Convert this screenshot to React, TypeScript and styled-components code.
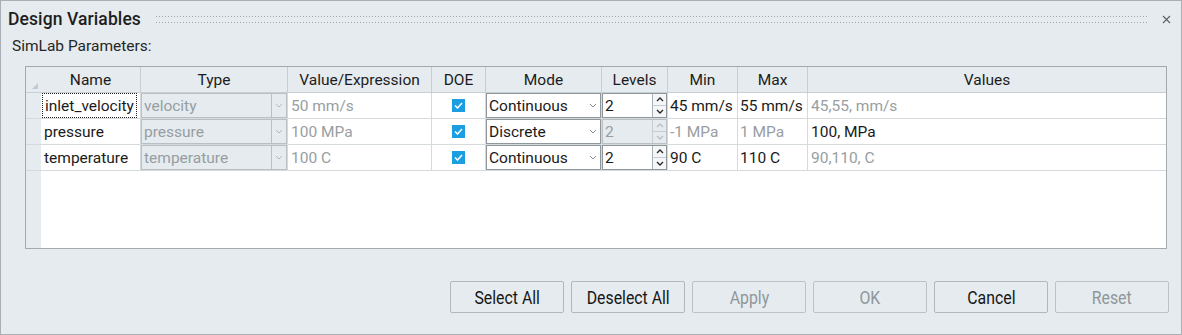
import styled, { createGlobalStyle } from "styled-components";

const GlobalStyle = createGlobalStyle`
  html, body {
    margin: 0;
    padding: 0;
    background: #e5ebee;
  }
  * {
    box-sizing: border-box;
  }
`;

const COLS = "15px 100px 147px 144px 54px 116px 66px 70px 70px 1fr";

type Row = {
  name: string;
  type: string;
  value: string;
  mode: string;
  levels: string;
  levelsDisabled: boolean;
  min: string;
  max: string;
  values: string;
  rangeMuted: boolean;
  focused?: boolean;
};

const rows: Row[] = [
  {
    name: "inlet_velocity",
    type: "velocity",
    value: "50 mm/s",
    mode: "Continuous",
    levels: "2",
    levelsDisabled: false,
    min: "45 mm/s",
    max: "55 mm/s",
    values: "45,55, mm/s",
    rangeMuted: false,
    focused: true,
  },
  {
    name: "pressure",
    type: "pressure",
    value: "100 MPa",
    mode: "Discrete",
    levels: "2",
    levelsDisabled: true,
    min: "-1 MPa",
    max: "1 MPa",
    values: "100, MPa",
    rangeMuted: true,
  },
  {
    name: "temperature",
    type: "temperature",
    value: "100 C",
    mode: "Continuous",
    levels: "2",
    levelsDisabled: false,
    min: "90 C",
    max: "110 C",
    values: "90,110, C",
    rangeMuted: false,
  },
];

const headers = ["Name", "Type", "Value/Expression", "DOE", "Mode", "Levels", "Min", "Max", "Values"];

const Chevron = ({ color = "#9aa1a6" }: { color?: string }) => (
  <svg width="8" height="5" viewBox="0 0 8 5">
    <polyline points="1,1 4,4 7,1" fill="none" stroke={color} strokeWidth="1" />
  </svg>
);

const SpinArrow = ({ up, color }: { up?: boolean; color: string }) => (
  <svg width="8" height="5" viewBox="0 0 8 5">
    <polyline
      points={up ? "1,4 4,1 7,4" : "1,1 4,4 7,1"}
      fill="none"
      stroke={color}
      strokeWidth="1.4"
    />
  </svg>
);

const App = () => {
  return (
    <>
      <GlobalStyle />
      <Window>
        <TitleBar>
          <Title>Design Variables</Title>
          <Grip />
          <CloseBtn>
            <svg width="9" height="9" viewBox="0 0 9 9">
              <path d="M1 1 L8 8 M8 1 L1 8" stroke="#5a5f63" strokeWidth="1.1" />
            </svg>
          </CloseBtn>
        </TitleBar>
        <SubLabel>SimLab Parameters:</SubLabel>
        <Table>
          <GridRow>
            <Corner>
              <CornerMark />
            </Corner>
            {headers.map((h) => (
              <HeaderCell key={h}>{h}</HeaderCell>
            ))}
          </GridRow>
          {rows.map((r) => (
            <GridRow key={r.name}>
              <RowHead />
              <Cell>
                {r.focused ? <FocusBox>{r.name}</FocusBox> : <Text>{r.name}</Text>}
              </Cell>
              <Cell $flush>
                <Combo $disabled>
                  <ComboText $muted>{r.type}</ComboText>
                  <ComboArrow $divider>
                    <Chevron color="#b3b9bd" />
                  </ComboArrow>
                </Combo>
              </Cell>
              <Cell>
                <Text $muted>{r.value}</Text>
              </Cell>
              <Cell $center>
                <Check>
                  <svg width="9" height="7" viewBox="0 0 9 7">
                    <polyline points="1,3.5 3.5,6 8,1" fill="none" stroke="#fff" strokeWidth="1.5" />
                  </svg>
                </Check>
              </Cell>
              <Cell $flush>
                <Combo>
                  <ComboText>{r.mode}</ComboText>
                  <ComboArrow>
                    <Chevron color="#8a9196" />
                  </ComboArrow>
                </Combo>
              </Cell>
              <Cell $flush>
                <Spin $disabled={r.levelsDisabled}>
                  <ComboText $muted={r.levelsDisabled}>{r.levels}</ComboText>
                  <SpinButtons>
                    <SpinBtn $disabled={r.levelsDisabled}>
                      <SpinArrow up color={r.levelsDisabled ? "#b8bec2" : "#2a2a2a"} />
                    </SpinBtn>
                    <SpinBtn $disabled={r.levelsDisabled}>
                      <SpinArrow color={r.levelsDisabled ? "#b8bec2" : "#2a2a2a"} />
                    </SpinBtn>
                  </SpinButtons>
                </Spin>
              </Cell>
              <Cell $tight>
                <Text $muted={r.rangeMuted}>{r.min}</Text>
              </Cell>
              <Cell $tight>
                <Text $muted={r.rangeMuted}>{r.max}</Text>
              </Cell>
              <Cell>
                <Text $muted={!r.rangeMuted}>{r.values}</Text>
              </Cell>
            </GridRow>
          ))}
          <Filler>
            <FillerHead />
            <FillerBody />
          </Filler>
        </Table>
        <ButtonBar>
          <Button>
            <BtnLabel>Select All</BtnLabel>
          </Button>
          <Button>
            <BtnLabel>Deselect All</BtnLabel>
          </Button>
          <Button disabled>
            <BtnLabel>Apply</BtnLabel>
          </Button>
          <Button disabled>
            <BtnLabel>OK</BtnLabel>
          </Button>
          <Button>
            <BtnLabel>Cancel</BtnLabel>
          </Button>
          <Button disabled>
            <BtnLabel>Reset</BtnLabel>
          </Button>
        </ButtonBar>
      </Window>
    </>
  );
};

const Window = styled.div`
  width: 1182px;
  height: 335px;
  border: 1px solid #a9b0b5;
  background: #e5ebee;
  display: flex;
  flex-direction: column;
  font-family: Roboto, "Liberation Sans", Arial, sans-serif;
  color: #1c1c1c;
`;

const TitleBar = styled.div`
  height: 36px;
  display: flex;
  align-items: center;
  padding: 0 10px 0 7px;
`;

const Title = styled.div`
  font-size: 17.5px;
  font-weight: 500;
  color: #1e1e1e;
  letter-spacing: 0.1px;
`;

const Grip = styled.div`
  flex: 1;
  height: 7px;
  margin: 0 12px 0 15px;
  background-image: linear-gradient(90deg, #a0a7ac 1px, transparent 1px),
    linear-gradient(90deg, #a0a7ac 1px, transparent 1px);
  background-size: 3px 1px, 3px 1px;
  background-position: 0 0, 0 6px;
  background-repeat: repeat-x;
`;

const CloseBtn = styled.div`
  width: 10px;
  height: 10px;
  display: flex;
  align-items: center;
  justify-content: center;
`;

const SubLabel = styled.div`
  height: 18px;
  line-height: 18px;
  margin-left: 11px;
  font-size: 15.5px;
  color: #262626;
`;

const Table = styled.div`
  margin: 11px 14px 0 24px;
  height: 183px;
  border: 1px solid #a3aaae;
  background: #fff;
  display: flex;
  flex-direction: column;
`;

const GridRow = styled.div`
  display: grid;
  grid-template-columns: ${COLS};
  height: 26px;
`;

const Corner = styled.div`
  position: relative;
  background: #e5ebee;
  border-bottom: 1px solid #c8cfd3;
`;

const CornerMark = styled.div`
  position: absolute;
  right: 3px;
  bottom: 3px;
  width: 0;
  height: 0;
  border-left: 6px solid transparent;
  border-bottom: 6px solid #c3cacf;
`;

const HeaderCell = styled.div`
  background: #e5ebee;
  border-right: 1px solid #c8cfd3;
  border-bottom: 1px solid #c8cfd3;
  display: flex;
  align-items: center;
  justify-content: center;
  font-size: 15.5px;
  color: #1c1c1c;
  &:last-child {
    border-right: none;
  }
`;

const RowHead = styled.div`
  background: #e5ebee;
  border-bottom: 1px solid #d5dadd;
`;

const Cell = styled.div<{ $flush?: boolean; $center?: boolean; $tight?: boolean }>`
  border-right: 1px solid #d5dadd;
  border-bottom: 1px solid #d5dadd;
  display: flex;
  align-items: center;
  justify-content: ${(p) => (p.$center ? "center" : "flex-start")};
  padding: ${(p) => (p.$flush ? "0" : p.$tight ? "0 2px" : "0 3px")};
  font-size: 15.5px;
  white-space: nowrap;
  overflow: hidden;
  &:last-child {
    border-right: none;
  }
`;

const Text = styled.span<{ $muted?: boolean }>`
  color: ${(p) => (p.$muted ? "#979ea2" : "#1a1a1a")};
`;

const FocusBox = styled.span`
  flex: 1;
  align-self: stretch;
  margin: 0 0 0 -2px;
  padding: 0 2px;
  display: flex;
  align-items: center;
  border: 1px dotted #222;
  color: #1a1a1a;
`;

const Combo = styled.div<{ $disabled?: boolean }>`
  width: 100%;
  height: 100%;
  display: flex;
  align-items: center;
  background: ${(p) => (p.$disabled ? "#e5ebee" : "#fff")};
  border: 1px solid ${(p) => (p.$disabled ? "#b9c0c5" : "#8f979c")};
`;

const ComboText = styled.span<{ $muted?: boolean }>`
  flex: 1;
  padding-left: 2px;
  color: ${(p) => (p.$muted ? "#979ea2" : "#1a1a1a")};
`;

const ComboArrow = styled.div<{ $divider?: boolean }>`
  width: 15px;
  height: 100%;
  display: flex;
  align-items: center;
  justify-content: center;
  border-left: ${(p) => (p.$divider ? "1px solid #b9c0c5" : "none")};
`;

const Check = styled.div`
  width: 13px;
  height: 13px;
  background: #1b9fe0;
  display: flex;
  align-items: center;
  justify-content: center;
`;

const Spin = styled.div<{ $disabled?: boolean }>`
  width: 100%;
  height: 100%;
  display: flex;
  align-items: center;
  background: ${(p) => (p.$disabled ? "#e5ebee" : "#fff")};
  border: 1px solid ${(p) => (p.$disabled ? "#b9c0c5" : "#8f979c")};
`;

const SpinButtons = styled.div`
  width: 14px;
  height: 100%;
  display: flex;
  flex-direction: column;
`;

const SpinBtn = styled.div<{ $disabled?: boolean }>`
  flex: 1;
  display: flex;
  align-items: center;
  justify-content: center;
  background: ${(p) => (p.$disabled ? "#e5ebee" : "#f4f6f7")};
  border-left: 1px solid ${(p) => (p.$disabled ? "#c6ccd0" : "#a9b0b4")};
  & + & {
    border-top: 1px solid ${(p) => (p.$disabled ? "#c6ccd0" : "#a9b0b4")};
  }
`;

const Filler = styled.div`
  flex: 1;
  display: grid;
  grid-template-columns: 15px 1fr;
`;

const FillerHead = styled.div`
  background: #e5ebee;
`;

const FillerBody = styled.div`
  background: #fff;
`;

const ButtonBar = styled.div`
  display: flex;
  justify-content: flex-end;
  gap: 7px;
  margin-top: 32px;
  padding-right: 12px;
`;

const Button = styled.button`
  width: 114px;
  height: 32px;
  padding: 0;
  border: 1px solid #b0b8bd;
  border-radius: 2px;
  background: #e5ebee;
  font-family: Roboto, "Liberation Sans", Arial, sans-serif;
  font-size: 18px;
  color: #161616;
  display: flex;
  align-items: center;
  justify-content: center;
  &:disabled {
    color: #8f979c;
    border-color: #bcc3c8;
  }
`;

const BtnLabel = styled.span`
  display: inline-block;
  transform: scaleX(0.88);
  white-space: nowrap;
`;

export default App;
